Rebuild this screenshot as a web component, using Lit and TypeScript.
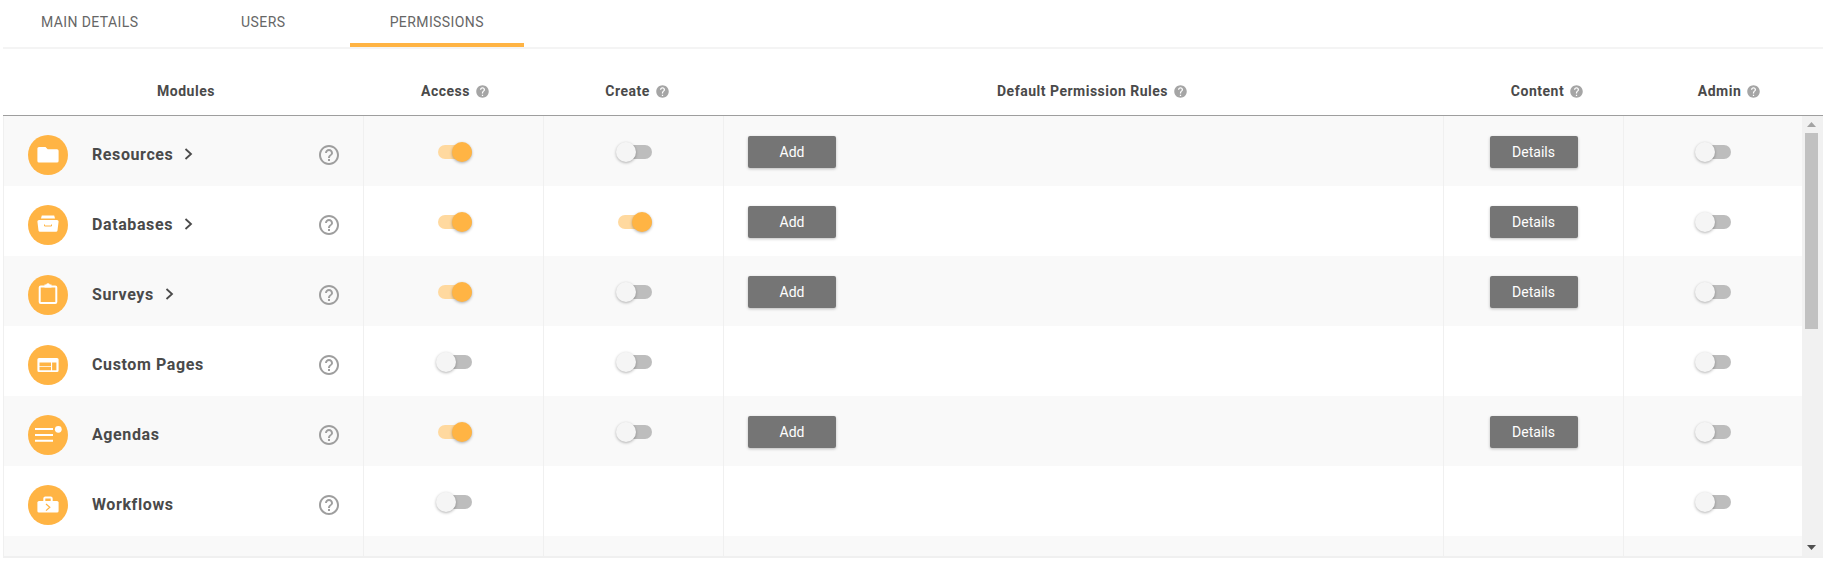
import { LitElement, html, css, svg, nothing } from "lit";
import { customElement } from "lit/decorators.js";

const HELP = "M12 2C6.48 2 2 6.48 2 12s4.48 10 10 10 10-4.48 10-10S17.52 2 12 2zm1 17h-2v-2h2v2zm2.07-7.75l-.9.92C13.45 12.9 13 13.5 13 15h-2v-.5c0-1.1.45-2.1 1.17-2.83l1.24-1.26c.37-.36.59-.86.59-1.41 0-1.1-.9-2-2-2s-2 .9-2 2H8c0-2.21 1.79-4 4-4s4 1.79 4 4c0 .88-.36 1.68-.93 2.25z";
const HELP_O = "M11 18h2v-2h-2v2zm1-16C6.48 2 2 6.48 2 12s4.48 10 10 10 10-4.48 10-10S17.52 2 12 2zm0 18c-4.41 0-8-3.59-8-8s3.59-8 8-8 8 3.59 8 8-3.59 8-8 8zm0-14c-2.21 0-4 1.79-4 4h2c0-1.1.9-2 2-2s2 .9 2 2c0 2-3 1.75-3 5h2c0-2.25 3-2.5 3-5 0-2.21-1.79-4-4-4z";

const O = "#ffb444";
const ICONS: Record<string, unknown> = {
  folder: svg`<path fill="#fff" d="M11 12h6.5l2.2 2.2H29a1.6 1.6 0 0 1 1.6 1.6V26a1.6 1.6 0 0 1-1.6 1.6H11A1.6 1.6 0 0 1 9.4 26V13.6A1.6 1.6 0 0 1 11 12z"/>`,
  db: svg`<path fill="#fff" d="M13.8 10.4h12.4l.8 3H13z"/><path fill="#fff" d="M11 15h18a1.6 1.6 0 0 1 1.6 1.6L29.5 25.4a1.6 1.6 0 0 1-1.6 1.4H12.1a1.6 1.6 0 0 1-1.6-1.4L9.4 16.6A1.6 1.6 0 0 1 11 15z"/><path fill="none" stroke="${O}" stroke-width="1" d="M16.5 19.5v1.5h7v-1.5"/>`,
  clip: svg`<rect x="11.7" y="11.5" width="16.6" height="16.5" rx="1" fill="none" stroke="#fff" stroke-width="2"/><path fill="#fff" d="M16.5 12.5V9.5h1.7a1.9 1.9 0 0 1 3.6 0h1.7v3z"/>`,
  page: svg`<path fill="#fff" fill-rule="evenodd" d="M11 13h18a1.6 1.6 0 0 1 1.6 1.6v10.8A1.6 1.6 0 0 1 29 27H11a1.6 1.6 0 0 1-1.6-1.6V14.6A1.6 1.6 0 0 1 11 13zm.5 4.400v3.500H23v-3.500zm0 4.400v3.500H23v-3.500zm12.600-4.400v7.900h4.300v-7.900z"/>`,
  agenda: svg`<path fill="#fff" d="M7 13h18v2H7zm0 6h18v2H7zm0 5.700h18v2H7z"/><circle cx="30.3" cy="14.3" r="3.4" fill="#fff"/>`,
  flow: svg`<path fill="none" stroke="#fff" stroke-width="2" d="M16.3 17v-3.500a1 1 0 0 1 1-1h5.400a1 1 0 0 1 1 1V17"/><rect x="9.4" y="16" width="21.2" height="11.5" rx="1.6" fill="#fff"/><path fill="none" stroke="${O}" stroke-width="1.2" d="M18 19l3.8 3.3L18 25.6"/>`,
};

interface Row { name: string; icon: string; chevron?: boolean; access: boolean; create?: boolean; actions?: boolean; }
const ROWS: Row[] = [
  { name: "Resources", icon: "folder", chevron: true, access: true, create: false, actions: true },
  { name: "Databases", icon: "db", chevron: true, access: true, create: true, actions: true },
  { name: "Surveys", icon: "clip", chevron: true, access: true, create: false, actions: true },
  { name: "Custom Pages", icon: "page", access: false, create: false },
  { name: "Agendas", icon: "agenda", access: true, create: false, actions: true },
  { name: "Workflows", icon: "flow", access: false },
];

@customElement("app-root")
export class AppRoot extends LitElement {
  static styles = css`
    :host { display: block; width: 1823px; height: 563px; overflow: hidden; background: #fff; font-family: Roboto, "Liberation Sans", sans-serif; color: #4a4a4a; }
    .tabs { display: flex; height: 47px; margin-left: 3px; border-bottom: 2px solid #f4f4f4; }
    .tab { width: 173.5px; box-sizing: border-box; height: 47px; display: flex; align-items: center; justify-content: center; font-size: 14px; letter-spacing: 0.4px; color: #666; text-transform: uppercase; border-bottom: 4px solid transparent; }
    .tab.active { border-bottom-color: #ffb444; }
    .head { display: grid; grid-template-columns: 364px 182px 182px 728px 182px 182px; margin-left: 3px; height: 66px; box-sizing: content-box; border-bottom: 1px solid #9e9e9e; }
    .hcell { display: flex; align-items: center; justify-content: center; gap: 5px; padding-top: 18px; padding-right: 5px; font-size: 14px; font-weight: 700; letter-spacing: 0.5px; }
    .hcell.first { padding-right: 0; padding-left: 2px; }
    .hcell svg { width: 15px; height: 15px; fill: #a5a5a5; flex: none; }
    .body { display: flex; height: 440px; margin-left: 3px; border-bottom: 2px solid #f0f0f0; }
    .rows { flex: 1; min-width: 0; overflow: hidden; }
    .row { display: grid; grid-template-columns: 360px 180px 180px 720px 180px 179px; height: 70px; }
    .row.alt { background: #f9f9f9; }
    .row.stub { height: 20px; }
    .cell { box-sizing: border-box; border-left: 1px solid #f0f0f0; display: flex; align-items: center; justify-content: center; padding: 2px 0 0 2px; }
    .cell.left { justify-content: flex-start; padding-left: 24px; }
    .cell.content { padding-left: 0; }
    .cell.mod { justify-content: flex-start; padding: 8px 22px 0 24px; }
    .badge { width: 40px; height: 40px; flex: none; }
    .name { margin-left: 24px; font-size: 16px; font-weight: 700; letter-spacing: 0.6px; margin-top: -2px; }
    .chev { width: 9px; height: 12px; margin-left: 11px; margin-top: -2px; flex: none; }
    .q { width: 24px; height: 24px; fill: #9e9e9e; margin-left: auto; flex: none; }
    .toggle { position: relative; width: 34px; height: 14px; border-radius: 7px; background: #bdbdbd; }
    .toggle.on { background: #ffd99f; }
    .knob { position: absolute; top: -3px; left: -2px; width: 20px; height: 20px; border-radius: 50%; background: #f5f5f5; box-shadow: 0 1px 3px rgba(0,0,0,.3); }
    .toggle.on .knob { left: 14px; background: #ffb444; }
    .btn { width: 88px; height: 32px; display: flex; align-items: center; justify-content: center; background: #757575; color: #fff; border-radius: 2px; font-size: 14px; box-shadow: 0 1px 3px rgba(0,0,0,.25); }
    .bar { width: 21px; flex: none; background: #f1f1f1; display: flex; flex-direction: column; padding: 0 5px 0 3px; box-sizing: border-box; }
    .arrow { height: 17px; flex: none; display: flex; align-items: center; justify-content: center; }
    .arrow svg { width: 9px; height: 5px; }
    .thumb { height: 196px; background: #c1c1c1; flex: none; }
    .spacer { flex: 1; }
  `;

  private toggle(on: boolean) {
    return html`<div class="toggle ${on ? "on" : ""}"><div class="knob"></div></div>`;
  }

  private row(r: Row, i: number) {
    return html`<div class="row ${i % 2 === 0 ? "alt" : ""}">
      <div class="cell mod">
        <svg class="badge" viewBox="0 0 40 40"><circle cx="20" cy="20" r="20" fill="#ffb444"></circle>${ICONS[r.icon]}</svg>
        <span class="name">${r.name}</span>
        ${r.chevron ? html`<svg class="chev" viewBox="0 0 9 12"><path d="M1.5 1l5.5 5-5.5 5" fill="none" stroke="#4a4a4a" stroke-width="1.8"></path></svg>` : nothing}
        <svg class="q" viewBox="0 0 24 24"><path d="${HELP_O}"></path></svg>
      </div>
      <div class="cell">${this.toggle(r.access)}</div>
      <div class="cell">${r.create === undefined ? nothing : this.toggle(r.create)}</div>
      <div class="cell left">${r.actions ? html`<div class="btn">Add</div>` : nothing}</div>
      <div class="cell content">${r.actions ? html`<div class="btn">Details</div>` : nothing}</div>
      <div class="cell">${this.toggle(false)}</div>
    </div>`;
  }

  render() {
    const heads = ["Access", "Create", "Default Permission Rules", "Content", "Admin"];
    return html`
      <div class="tabs">
        <div class="tab">Main Details</div>
        <div class="tab">Users</div>
        <div class="tab active">Permissions</div>
      </div>
      <div class="head">
        <div class="hcell first">Modules</div>
        ${heads.map((h) => html`<div class="hcell">${h}<svg viewBox="0 0 24 24"><path d="${HELP}"></path></svg></div>`)}
      </div>
      <div class="body">
        <div class="rows">
          ${ROWS.map((r, i) => this.row(r, i))}
          <div class="row alt stub"><div class="cell"></div><div class="cell"></div><div class="cell"></div><div class="cell"></div><div class="cell"></div><div class="cell"></div></div>
        </div>
        <div class="bar">
          <div class="arrow"><svg viewBox="0 0 9 5"><path d="M4.5 0L9 5H0z" fill="#a3a3a3"></path></svg></div>
          <div class="thumb"></div>
          <div class="spacer"></div>
          <div class="arrow"><svg viewBox="0 0 9 5"><path d="M0 0h9L4.5 5z" fill="#505050"></path></svg></div>
        </div>
      </div>
    `;
  }
}
